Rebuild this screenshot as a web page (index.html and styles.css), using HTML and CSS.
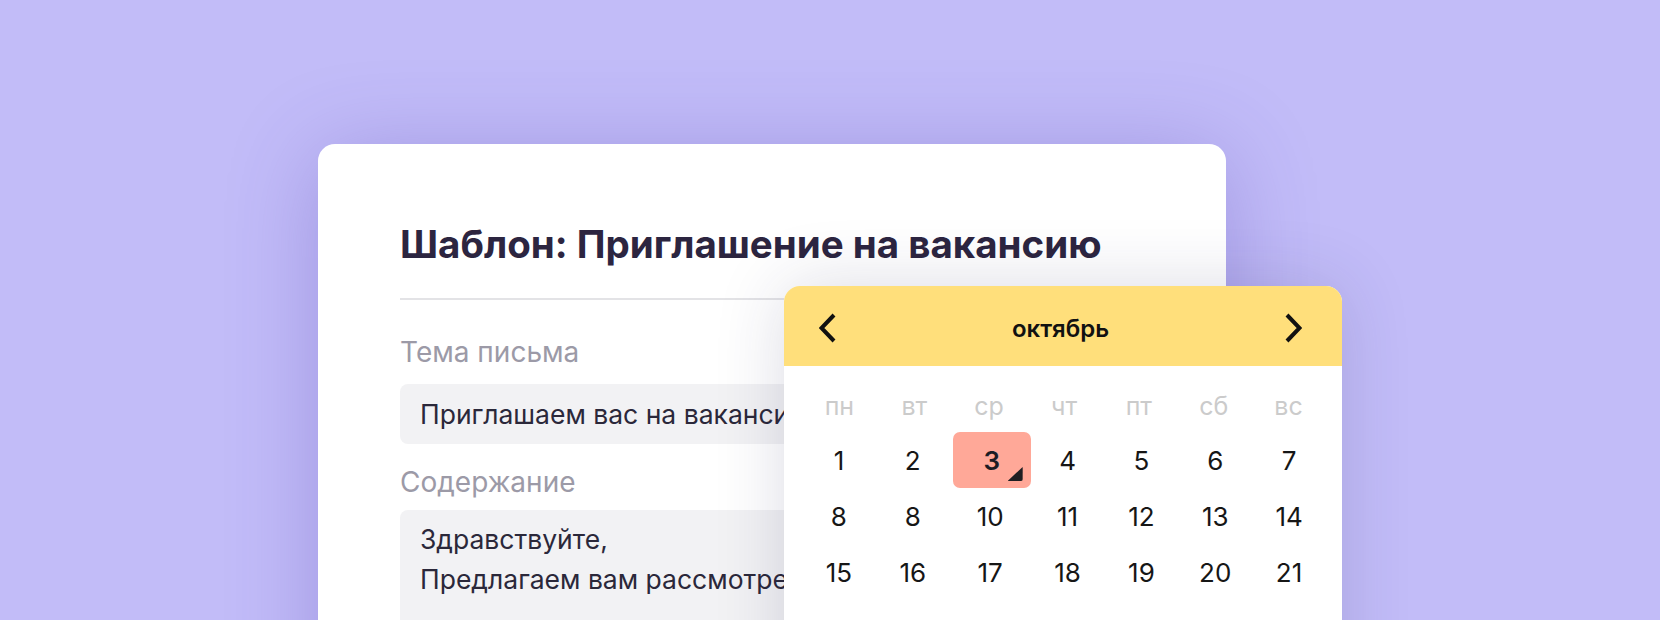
FILE: index.html
```html
<!DOCTYPE html>
<html lang="ru">
<head>
<meta charset="utf-8">
<title>Шаблон</title>
<link rel="stylesheet" href="styles.css">
</head>
<body>
<div class="stage">
  <div class="card">
    <h1 class="title">Шаблон: Приглашение на вакансию</h1>
    <div class="divider"></div>
    <div class="label label-first">Тема письма</div>
    <div class="input">Приглашаем вас на вакансию</div>
    <div class="label label-second">Содержание</div>
    <div class="textarea">
      <div class="line">Здравствуйте,</div>
      <div class="line">Предлагаем вам рассмотреть</div>
    </div>

    <div class="calendar">
      <div class="cal-head">
        <svg class="chev" width="20" height="32" viewBox="0 0 20 32"><polyline points="15,3 2.5,16 15,29" fill="none" stroke="#111" stroke-width="4"/></svg>
        <span class="month">октябрь</span>
        <svg class="chev" width="20" height="32" viewBox="0 0 20 32"><polyline points="5,3 17.5,16 5,29" fill="none" stroke="#111" stroke-width="4"/></svg>
      </div>
      <div class="cal-body">
        <div class="weekdays">
          <span>пн</span><span>вт</span><span>ср</span><span>чт</span><span>пт</span><span>сб</span><span>вс</span>
        </div>
        <div class="days">
          <span class="day">1</span><span class="day">2</span><span class="day selected">3<i class="corner"></i></span><span class="day">4</span><span class="day">5</span><span class="day">6</span><span class="day">7</span>
          <span class="day">8</span><span class="day">8</span><span class="day">10</span><span class="day">11</span><span class="day">12</span><span class="day">13</span><span class="day">14</span>
          <span class="day">15</span><span class="day">16</span><span class="day">17</span><span class="day">18</span><span class="day">19</span><span class="day">20</span><span class="day">21</span>
        </div>
      </div>
    </div>
  </div>
</div>
</body>
</html>
```
FILE: styles.css
```css
html, body {
  margin: 0;
  padding: 0;
}
body {
  width: 1660px;
  height: 620px;
  overflow: hidden;
  background: #c2bcf8;
  font-family: Inter, "Noto Sans", sans-serif;
}
.stage {
  padding: 144px 0 0 318px;
}
.card {
  position: relative;
  width: 908px;
  height: 580px;
  box-sizing: border-box;
  padding: 78px 82px 0;
  background: #ffffff;
  border-radius: 17px;
  box-shadow: 0 10px 90px rgba(70, 50, 170, 0.28);
}
.title {
  margin: 0;
  font-size: 38.5px;
  line-height: 44px;
  font-weight: 700;
  color: #2c2540;
  white-space: nowrap;
}
.divider {
  margin-top: 32px;
  height: 2px;
  background: #e3e3e6;
}
.label {
  font-size: 28px;
  line-height: 40px;
  color: #9c9aa7;
}
.label-first { margin-top: 32px; }
.label-second { margin-top: 18px; }
.input {
  margin-top: 12px;
  height: 60px;
  box-sizing: border-box;
  padding: 0 20px;
  border-radius: 8px;
  background: #f2f2f4;
  font-size: 26.5px;
  line-height: 60px;
  color: #2b283a;
  white-space: nowrap;
  overflow: hidden;
}
.textarea {
  margin-top: 8px;
  height: 200px;
  box-sizing: border-box;
  padding: 9px 20px;
  border-radius: 8px;
  background: #f2f2f4;
  font-size: 26.5px;
  line-height: 40px;
  color: #2b283a;
  white-space: nowrap;
  overflow: hidden;
}
.calendar {
  position: absolute;
  left: 466px;
  top: 142px;
  width: 558px;
  height: 420px;
  background: #ffffff;
  border-radius: 16px;
  overflow: hidden;
  box-shadow: 0 0 70px rgba(40, 40, 90, 0.16);
}
.cal-head {
  height: 80px;
  box-sizing: border-box;
  padding: 4px 40px 0 35px;
  background: #ffdf7b;
  display: flex;
  align-items: center;
  justify-content: space-between;
}
.chev {
  display: block;
}
.month {
  font-size: 24px;
  font-weight: 600;
  color: #111111;
}
.cal-body {
  padding: 20px 16px 0 18px;
}
.weekdays {
  display: grid;
  grid-template-columns: repeat(7, 1fr);
  height: 40px;
  margin-bottom: 6px;
  font-size: 25px;
  line-height: 40px;
  color: #cbcbcb;
  text-align: center;
}
.days {
  display: grid;
  grid-template-columns: repeat(7, 1fr);
  grid-auto-rows: 56px;
}
.day {
  display: flex;
  align-items: center;
  justify-content: center;
  font-size: 26px;
  color: #161616;
}
.day.selected {
  position: relative;
  justify-self: center;
  width: 78px;
  margin-left: 3px;
  border-radius: 7px;
  background: #ffa898;
  font-weight: 600;
  color: #1c1c24;
}
.corner {
  position: absolute;
  right: 8px;
  bottom: 7px;
  width: 15px;
  height: 14px;
  background: #1e1e22;
  clip-path: polygon(100% 0, 100% 100%, 0 100%);
  border-bottom-right-radius: 2px;
}
```
